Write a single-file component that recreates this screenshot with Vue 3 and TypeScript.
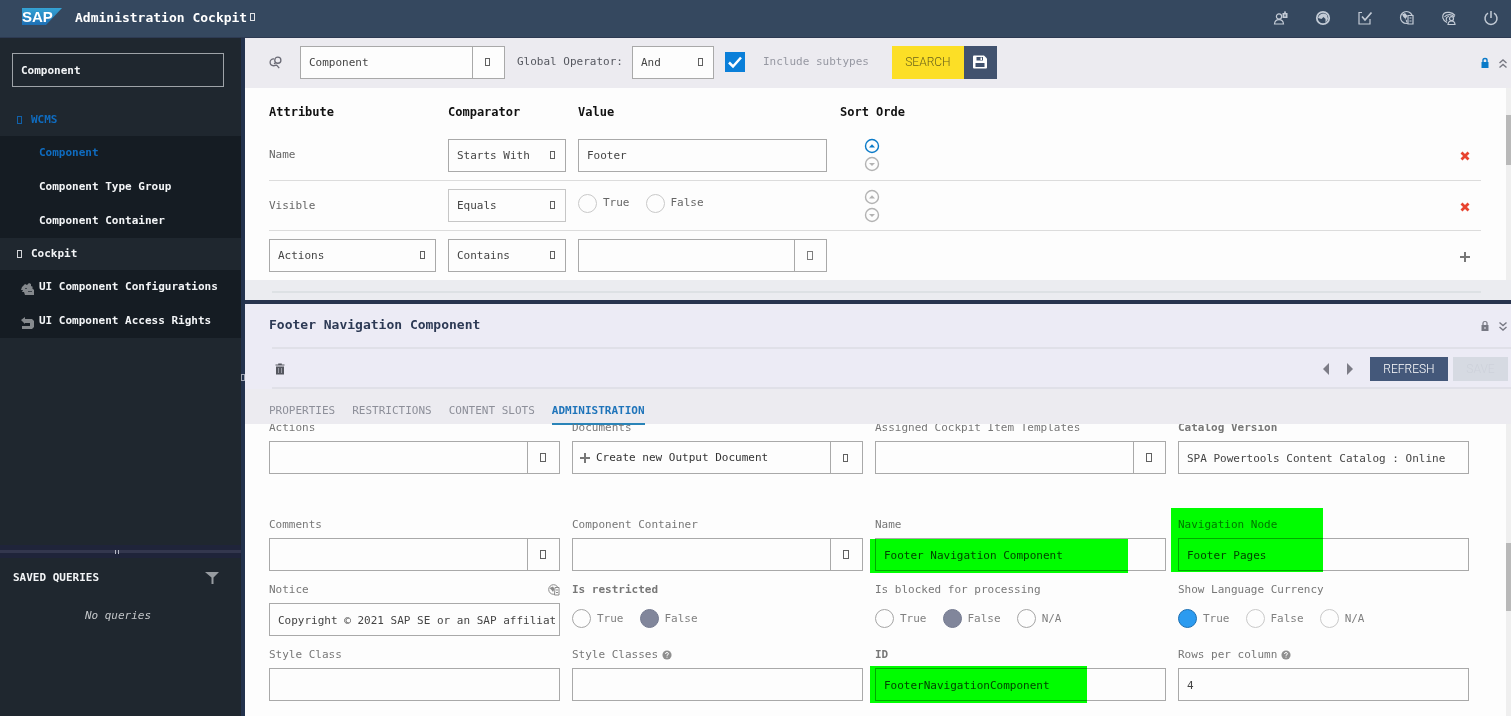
<script setup lang="ts">
import { reactive, ref } from 'vue'

interface NavGroup {
  title: string
  active: boolean
  items: { label: string; active?: boolean; icon?: string }[]
}

interface Field {
  id: string
  label: string
  kind: 'text' | 'combo' | 'create' | 'radio'
  value?: string
  bold?: boolean
  help?: boolean
  globe?: boolean
  options?: string[]
  tone?: string
  mark?: string
  spaced?: boolean
}

const navGroups: NavGroup[] = [
  {
    title: 'WCMS',
    active: true,
    items: [
      { label: 'Component', active: true },
      { label: 'Component Type Group' },
      { label: 'Component Container' },
    ],
  },
  {
    title: 'Cockpit',
    active: false,
    items: [
      { label: 'UI Component Configurations', icon: 'config' },
      { label: 'UI Component Access Rights', icon: 'rights' },
    ],
  },
]

const navQuery = ref('Component')
const typeName = ref('Component')
const subtypes = ref(true)
const nameFilter = ref('Footer')
const tabs = ['PROPERTIES', 'RESTRICTIONS', 'CONTENT SLOTS', 'ADMINISTRATION']
const activeTab = ref('ADMINISTRATION')

const fields = reactive<Field[]>([
  { id: 'actions', label: 'Actions', kind: 'combo', value: '', spaced: true },
  { id: 'documents', label: 'Documents', kind: 'create', spaced: true },
  { id: 'templates', label: 'Assigned Cockpit Item Templates', kind: 'combo', value: '', spaced: true },
  { id: 'catalog', label: 'Catalog Version', kind: 'text', value: 'SPA Powertools Content Catalog : Online', bold: true, spaced: true },
  { id: 'comments', label: 'Comments', kind: 'combo', value: '' },
  { id: 'container', label: 'Component Container', kind: 'combo', value: '' },
  { id: 'name', label: 'Name', kind: 'text', value: 'Footer Navigation Component', mark: 'mark-name' },
  { id: 'node', label: 'Navigation Node', kind: 'text', value: 'Footer Pages', mark: 'mark-node' },
  { id: 'notice', label: 'Notice', kind: 'text', value: 'Copyright © 2021 SAP SE or an SAP affiliate company.', globe: true },
  { id: 'restricted', label: 'Is restricted', kind: 'radio', value: 'False', bold: true, options: ['True', 'False'], tone: 'muted' },
  { id: 'blocked', label: 'Is blocked for processing', kind: 'radio', value: 'False', options: ['True', 'False', 'N/A'], tone: 'muted' },
  { id: 'currency', label: 'Show Language Currency', kind: 'radio', value: 'True', options: ['True', 'False', 'N/A'], tone: 'light' },
  { id: 'styleclass', label: 'Style Class', kind: 'text', value: '' },
  { id: 'styleclasses', label: 'Style Classes', kind: 'text', value: '', help: true },
  { id: 'uid', label: 'ID', kind: 'text', value: 'FooterNavigationComponent', bold: true, mark: 'mark-id' },
  { id: 'rows', label: 'Rows per column', kind: 'text', value: '4', help: true },
])
</script>

<template>
  <div class="app">
    <header class="shell">
      <svg class="logo" viewBox="0 0 40 17" role="img" aria-label="SAP">
        <defs>
          <linearGradient id="sapfill" x1="0" y1="0" x2="0" y2="1">
            <stop offset="0" stop-color="#35a3d4" />
            <stop offset="1" stop-color="#1d6fb5" />
          </linearGradient>
        </defs>
        <path d="M0 0H40L24 17H0Z" fill="url(#sapfill)" />
        <text x="0" y="14" class="logo-text">SAP</text>
      </svg>
      <h1>Administration Cockpit</h1>
      <span class="tofu"></span>
      <nav class="shell-tools" aria-label="Shell">
        <button aria-label="User role">
          <svg viewBox="0 0 16 16"><circle cx="6" cy="6.500" r="2.600" /><path d="M1.500 14c.3-3 2-4.300 4.500-4.300S10.200 11 10.500 14Z" /><path d="M9.500 3H14.500V8H9.500ZM11 3V1.500h2V3h-.8V2.200h-.4V3Z" class="solid" /><path d="M12 4.500V6.500" class="cut" /></svg>
        </button>
        <button aria-label="Perspective">
          <svg viewBox="0 0 16 16"><circle cx="8" cy="8" r="6.200" stroke-width="1.800" /><path d="M3 8C4 3.500 9 2 12 5L13 9l-2.500 4V9L8.500 7 6.500 9Z" class="solid" /></svg>
        </button>
        <button aria-label="Tasks">
          <svg viewBox="0 0 16 16"><path d="M5 2.500H2V14H13V9" /><path d="M5 6.500 8 10 14.500 2.500" stroke-width="1.700" /></svg>
        </button>
        <button aria-label="Locale">
          <svg viewBox="0 0 16 16"><circle cx="7.500" cy="7.500" r="6" /><path d="M3 4.500 6 3 8.500 6 6.500 9 4.500 7ZM6.500 9l2 2-1 2Z" class="solid" /><path d="M9 5.500H14V14H9Z" class="cover" /><path d="M10.500 8h2M10.500 11h2" /></svg>
        </button>
        <button aria-label="Data user">
          <svg viewBox="0 0 16 16"><path d="M6 12.500C1 10 .8 5.500 3 3.500s8-1.500 11 2" /><path d="M3.500 7C6 3.500 11 4 13.500 7" /><path d="M6 11C4 8.500 6 6.500 8 6.500" /><circle cx="10.500" cy="8.700" r="2" /><path d="M7 14.500c.2-2.500 1.500-3.500 3.500-3.500s3.300 1 3.500 3.500Z" /></svg>
        </button>
        <button aria-label="Log out">
          <svg viewBox="0 0 16 16"><path d="M5 3.200A6 6 0 1 0 11 3.200M8 1v7" stroke-width="1.500" /></svg>
        </button>
      </nav>
    </header>

    <div class="body">
      <aside class="side">
        <div class="side-top">
          <input v-model="navQuery" class="nav-search" type="text" aria-label="Filter navigation" />
          <nav class="tree" aria-label="Explorer">
            <section v-for="g in navGroups" :key="g.title">
              <button class="group" :class="{ active: g.active }"><span class="tofu"></span>{{ g.title }}</button>
              <ul>
                <li v-for="i in g.items" :key="i.label">
                  <a href="#" :class="{ active: i.active }">
                    <span v-if="i.icon" class="node-icon">
                      <svg v-if="i.icon === 'config'" viewBox="0 0 14 14"><path d="M1 5l3-3 2 1 2-2 2 1v2l2 1-1 1 2 2v5H4l-1-3H1l1-2H0Z" fill="#85898d" /><path d="M4 6h2v1H4ZM7 9h4v1H7Z" fill="#3d444b" /></svg>
                      <svg v-else viewBox="0 0 14 14"><path d="M0 4l4-3v2h7l2 2v6l-2 2H1v-3h8V7H4v1Z" fill="#85898d" /></svg>
                    </span>
                    {{ i.label }}
                  </a>
                </li>
              </ul>
            </section>
          </nav>
        </div>
        <div class="side-split"><i></i><i></i></div>
        <section class="saved">
          <div class="saved-head">
            <h2>SAVED QUERIES</h2>
            <button aria-label="Filter saved queries">
              <svg viewBox="0 0 14 14"><path d="M0 1h14L8.500 6.500V13h-2V6.500Z" fill="#979ca1" /></svg>
            </button>
          </div>
          <p>No queries</p>
        </section>
      </aside>
      <div class="v-split"><span class="tofu"></span></div>

      <main class="main">
        <section class="search-pane">
          <div class="search-bar">
            <button class="mode" aria-label="Switch search mode">
              <svg viewBox="0 0 14 14"><circle cx="9.500" cy="4.500" r="3.300" /><path d="M5.500 3.200C2.500 3 1.200 4.800 1.200 6.800S2.700 10.500 5 10.500C6.500 10.500 7.500 10 8 9.300M8 9.500l3 3.500M7.200 7 5.500 8.700" /></svg>
            </button>
            <div class="combo type-combo">
              <input v-model="typeName" type="text" aria-label="Type" />
              <button aria-label="Open types"><span class="tofu"></span></button>
            </div>
            <label class="op-label" for="op">Global Operator:</label>
            <div class="pick op-pick">
              <select id="op"><option>And</option></select><span class="tofu"></span>
            </div>
            <span class="check">
              <input id="sub" v-model="subtypes" type="checkbox" />
              <svg viewBox="0 0 20 20"><path d="M4 10.500 8 14.500 16 5.500" fill="none" stroke="#fff" stroke-width="2.500" /></svg>
            </span>
            <label class="sub-label" for="sub">Include subtypes</label>
            <div class="actions">
              <button class="go">SEARCH</button>
              <button class="save-query" aria-label="Save query">
                <svg viewBox="0 0 14 14"><path d="M0 1.500Q0 .5 1 .5H11L14 3.500V12.500Q14 13.500 13 13.500H1Q0 13.500 0 12.500Z" fill="#fff" /><path d="M3.500 2H10V5.500H3.500ZM2.500 8H11.500V12H2.500Z" fill="#41526e" /><path d="M7.500 2.500H9V5H7.500Z" fill="#fff" /></svg>
              </button>
            </div>
            <div class="pane-tools">
              <button class="blue" aria-label="Locked">
                <svg viewBox="0 0 10 12"><path d="M1.500 5H8.500V11H1.500Z" fill="currentColor" /><path d="M3 5V3Q3 1.500 5 1.500T7 3V5" fill="none" stroke="currentColor" stroke-width="1.400" /></svg>
              </button>
              <button aria-label="Collapse">
                <svg viewBox="0 0 10 12"><path d="M1.500 6 5 3 8.500 6M1.500 10.500 5 7.500 8.500 10.500" fill="none" stroke="currentColor" stroke-width="1.400" /></svg>
              </button>
            </div>
          </div>

          <div class="scroller">
            <div class="conditions">
              <table>
                <colgroup><col class="c-attr" /><col class="c-comp" /><col class="c-value" /><col /><col class="c-act" /></colgroup>
                <thead>
                  <tr><th>Attribute</th><th>Comparator</th><th>Value</th><th>Sort Orde</th><th></th></tr>
                </thead>
                <tbody>
                  <tr>
                    <td>Name</td>
                    <td><div class="pick"><select aria-label="Name comparator"><option>Starts With</option></select><span class="tofu"></span></div></td>
                    <td><input v-model="nameFilter" class="box value" type="text" aria-label="Name value" /></td>
                    <td>
                      <div class="sort">
                        <button class="blue" aria-label="Sort name ascending"><svg viewBox="0 0 16 16"><circle cx="8" cy="8" r="6.500" /><path d="M5 9.500 8 6.300 11 9.500Z" class="tri" /></svg></button>
                        <button aria-label="Sort name descending"><svg viewBox="0 0 16 16"><circle cx="8" cy="8" r="6.500" /><path d="M5 7 8 10 11 7Z" class="tri" /></svg></button>
                      </div>
                    </td>
                    <td><button class="row-btn red" aria-label="Remove name"><svg viewBox="0 0 10 10"><path d="M1.500 1.500 8.500 8.500M8.500 1.500 1.500 8.500" /></svg></button></td>
                  </tr>
                  <tr>
                    <td>Visible</td>
                    <td><div class="pick soft"><select aria-label="Visible comparator"><option>Equals</option></select><span class="tofu"></span></div></td>
                    <td>
                      <div class="radios light dark-text">
                        <label><input type="radio" name="visible" />True</label>
                        <label><input type="radio" name="visible" />False</label>
                      </div>
                    </td>
                    <td>
                      <div class="sort">
                        <button aria-label="Sort visible ascending"><svg viewBox="0 0 16 16"><circle cx="8" cy="8" r="6.500" /><path d="M5 9.500 8 6.300 11 9.500Z" class="tri" /></svg></button>
                        <button aria-label="Sort visible descending"><svg viewBox="0 0 16 16"><circle cx="8" cy="8" r="6.500" /><path d="M5 7 8 10 11 7Z" class="tri" /></svg></button>
                      </div>
                    </td>
                    <td><button class="row-btn red" aria-label="Remove visible"><svg viewBox="0 0 10 10"><path d="M1.500 1.500 8.500 8.500M8.500 1.500 1.500 8.500" /></svg></button></td>
                  </tr>
                  <tr>
                    <td><div class="pick attr"><select aria-label="New attribute"><option>Actions</option></select><span class="tofu"></span></div></td>
                    <td><div class="pick"><select aria-label="New comparator"><option>Contains</option></select><span class="tofu"></span></div></td>
                    <td><div class="combo value"><input type="text" aria-label="New value" /><button aria-label="Choose value"><span class="tofu big"></span></button></div></td>
                    <td></td>
                    <td><button class="row-btn add" aria-label="Add condition"><svg viewBox="0 0 12 12"><path d="M6 1V11M1 6H11" /></svg></button></td>
                  </tr>
                </tbody>
              </table>
            </div>
            <div class="track"><div class="thumb thumb-top"></div></div>
          </div>
          <div class="search-foot"><hr /></div>
        </section>

        <div class="h-split"></div>

        <section class="editor">
          <div class="editor-title">
            <h2>Footer Navigation Component</h2>
            <div class="pane-tools">
              <button aria-label="Lock">
                <svg viewBox="0 0 10 12"><path d="M1.500 5H8.500V11H1.500Z" fill="currentColor" /><path d="M3 5V3Q3 1.500 5 1.500T7 3V5" fill="none" stroke="currentColor" stroke-width="1.200" /><path d="M5 7V9" stroke="#ecebf5" /></svg>
              </button>
              <button aria-label="Expand">
                <svg viewBox="0 0 10 12"><path d="M1.500 2.500 5 5.500 8.500 2.500M1.500 7 5 10 8.500 7" fill="none" stroke="currentColor" stroke-width="1.400" /></svg>
              </button>
            </div>
          </div>
          <div class="editor-bar">
            <button class="trash" aria-label="Delete">
              <svg viewBox="0 0 10 12"><path d="M.5 2.500V1.500H3.200V.5H6.800V1.500H9.500V2.500ZM1 3.500H9V11.500H1Z" fill="#55575f" /><path d="M3.500 5V10M6.500 5V10" stroke="#9a9ba5" /></svg>
            </button>
            <div class="editor-actions">
              <button class="arrow" aria-label="Previous"><svg viewBox="0 0 8 12"><path d="M7 0V12L1 6Z" fill="#7c7c86" /></svg></button>
              <button class="arrow" aria-label="Next"><svg viewBox="0 0 8 12"><path d="M1 0V12L7 6Z" fill="#7c7c86" /></svg></button>
              <button class="refresh">REFRESH</button>
              <button class="save" disabled>SAVE</button>
            </div>
          </div>
          <div class="tabs" role="tablist">
            <button v-for="t in tabs" :key="t" role="tab" :class="{ active: t === activeTab }" @click="activeTab = t">{{ t }}</button>
          </div>
          <div class="scroller fill">
            <div class="form-view">
              <div class="form">
                <div v-for="f in fields" :key="f.id" class="field" :class="{ spaced: f.spaced }">
                  <div class="caption" :class="{ bold: f.bold }">
                    <label :for="f.id">{{ f.label }}</label>
                    <svg v-if="f.help" class="help" viewBox="0 0 12 12"><circle cx="6" cy="6" r="5.500" fill="#8f8f8f" /><path d="M4.200 4.800Q4.300 3 6 3T7.800 4.600Q7.800 5.500 6 6.300V7M6 8V9.200" fill="none" stroke="#fff" stroke-width="1.200" /></svg>
                    <svg v-if="f.globe" class="globe" viewBox="0 0 12 12"><circle cx="5.500" cy="5.500" r="4.800" fill="none" stroke="#8a8a8a" /><path d="M1.500 4 5 2.500 6.500 5 5 8 3.500 6Z" fill="#8a8a8a" /><path d="M7 3.500H11V11H6.500Z" fill="#fdfdfd" stroke="#8a8a8a" /><path d="M8 6H10M8 8.500H10" stroke="#8a8a8a" /></svg>
                  </div>
                  <input v-if="f.kind === 'text'" :id="f.id" v-model="f.value" class="box" type="text" />
                  <div v-else-if="f.kind === 'combo'" class="combo">
                    <input :id="f.id" v-model="f.value" type="text" />
                    <button :aria-label="'Choose ' + f.label"><span class="tofu big"></span></button>
                  </div>
                  <div v-else-if="f.kind === 'create'" class="combo">
                    <button :id="f.id" class="create">
                      <svg viewBox="0 0 12 12"><path d="M6 1V11M1 6H11" /></svg>Create new Output Document
                    </button>
                    <button :aria-label="'Choose ' + f.label"><span class="tofu"></span></button>
                  </div>
                  <div v-else :id="f.id" class="radios" :class="f.tone" role="radiogroup">
                    <label v-for="o in f.options" :key="o"><input v-model="f.value" type="radio" :name="f.id" :value="o" />{{ o }}</label>
                  </div>
                  <div v-if="f.mark" class="mark" :class="f.mark"></div>
                </div>
              </div>
            </div>
            <div class="track"><div class="thumb thumb-bottom"></div></div>
          </div>
        </section>
      </main>
    </div>
  </div>
</template>

<style>
body {
  margin: 0;
  overflow: hidden;
}
</style>

<style scoped>
.app,
.app * {
  box-sizing: border-box;
}
.app {
  height: 100vh;
  display: flex;
  flex-direction: column;
  font-family: "DejaVu Sans Mono", "Liberation Mono", monospace;
  font-size: 11px;
  line-height: 16px;
  color: #444;
  background: #fdfdfd;
}
button,
input,
select {
  font: inherit;
  color: inherit;
  margin: 0;
  border-radius: 0;
}
button {
  padding: 0;
  border: 0;
  background: none;
  display: inline-flex;
  align-items: center;
}
h1,
h2,
p,
ul,
hr {
  margin: 0;
  padding: 0;
}
svg {
  display: block;
}
.tofu {
  display: inline-block;
  flex: none;
  width: 5px;
  height: 8px;
  border: 1px solid currentColor;
  opacity: 0.85;
}
.tofu.big {
  width: 6px;
  height: 9px;
}

/* Shell bar */
.shell {
  flex: none;
  height: 38px;
  display: flex;
  align-items: center;
  padding: 0 12px 4px 22px;
  color: #fff;
  background: #35485f;
  border-bottom: 1px solid #2d3a52;
}
.logo {
  width: 40px;
  height: 17px;
  margin-right: 13px;
}
.logo-text {
  font: bold 15px "Liberation Sans", sans-serif;
  fill: #fff;
}
.shell h1 {
  font-size: 13px;
  line-height: 18px;
  padding-top: 2px;
}
.shell > .tofu {
  margin-left: 3px;
}
.shell-tools {
  margin-left: auto;
  display: flex;
  gap: 26px;
  padding-top: 3px;
}
.shell-tools svg {
  width: 16px;
  height: 16px;
  fill: none;
  stroke: #c3cbd6;
  stroke-width: 1.2;
}
.shell-tools .solid {
  fill: #c3cbd6;
  stroke: none;
}
.shell-tools .cut {
  stroke: #35485f;
}
.shell-tools .cover {
  fill: #35485f;
}

/* Side navigation */
.body {
  flex: 1;
  min-height: 0;
  display: flex;
}
.side {
  flex: none;
  width: 241px;
  display: flex;
  flex-direction: column;
  color: #f3f5f7;
  background: #1f272f;
  font-weight: bold;
}
.side-top {
  flex: 1;
  padding-top: 15px;
}
.nav-search {
  display: block;
  width: 212px;
  height: 34px;
  margin: 0 0 17px 12px;
  padding: 1px 8px 0;
  background: transparent;
  border: 1px solid #9ea3a8;
}
.group {
  width: 100%;
  height: 32px;
  padding-left: 17px;
  gap: 9px;
  font-weight: bold;
}
.group.active {
  color: #0f6cc0;
}
.tree ul {
  list-style: none;
  background: #151c23;
}
.tree a {
  display: flex;
  align-items: center;
  height: 34px;
  padding-left: 39px;
  color: inherit;
  text-decoration: none;
  position: relative;
}
.tree a.active {
  color: #0f6cc0;
}
.node-icon {
  position: absolute;
  left: 21px;
  top: 12px;
}
.node-icon svg {
  width: 14px;
  height: 14px;
}
.side-split {
  height: 13px;
  display: flex;
  align-items: center;
  justify-content: center;
  gap: 2px;
  padding-right: 7px;
  background: linear-gradient(#1f243a 5px, #33374e 5px, #33374e 8px, #1f243a 8px);
}
.side-split i {
  width: 1px;
  height: 4px;
  background: #b5b8c4;
}
.saved {
  height: 158px;
  padding: 12px 22px 0 13px;
}
.saved-head {
  display: flex;
  align-items: center;
  justify-content: space-between;
}
.saved h2 {
  font-size: 11px;
}
.saved svg {
  width: 14px;
  height: 14px;
}
.saved p {
  padding: 22px 0 0 4px;
  text-align: center;
  font-weight: normal;
  font-style: italic;
  color: #c3c6c9;
}
.v-split {
  flex: none;
  width: 4px;
  display: flex;
  align-items: center;
  justify-content: center;
  color: #b5b8c4;
  background: #23324d;
}
.v-split .tofu {
  width: 4px;
  height: 7px;
}

/* Shared controls */
.main {
  flex: 1;
  min-width: 0;
  display: flex;
  flex-direction: column;
}
.box,
.combo,
.pick select {
  height: 33px;
  border: 1px solid #a9a9a9;
  background: #fdfdfd;
}
.box {
  display: block;
  width: 100%;
  padding: 1px 4px 0 8px;
}
.combo {
  display: flex;
}
.combo input {
  flex: 1;
  min-width: 0;
  padding: 1px 8px 0;
  border: 0;
  background: transparent;
}
.combo > button:last-child {
  width: 32px;
  padding-right: 2px;
  justify-content: center;
  border-left: 1px solid #a9a9a9;
}
.pick {
  position: relative;
  width: 118px;
}
.pick select {
  display: block;
  width: 100%;
  padding: 1px 8px 0;
  appearance: none;
}
.pick .tofu {
  position: absolute;
  right: 11px;
  top: 12px;
  pointer-events: none;
}
.pick.soft select {
  border-color: #c6c6c6;
}
.radios {
  display: flex;
  align-items: center;
  gap: 16px;
  height: 31px;
  color: #808080;
}
.radios.dark-text {
  height: 36px;
  padding-bottom: 5px;
  color: #666;
}
.radios label {
  display: flex;
  align-items: center;
  gap: 6px;
}
.radios input {
  appearance: none;
  width: 19px;
  height: 19px;
  border: 1px solid #a5a5a5;
  border-radius: 50%;
  background: #fdfdfd;
}
.radios.light input {
  border-color: #c9c9c9;
}
.radios.muted input:checked {
  background: #81869b;
  border-color: #747a90;
}
.radios.light input:checked {
  background: #2b9bf0;
  border-color: #1b6fb3;
}
.blue {
  color: #0a7ac8;
}
.pane-tools {
  margin-left: auto;
  display: flex;
  gap: 8px;
  padding-top: 2px;
  color: #777883;
}
.pane-tools .blue {
  color: #0a7ac8;
}
.pane-tools svg {
  width: 10px;
  height: 12px;
}
.scroller {
  display: flex;
  background: #fdfdfd;
}
.track {
  flex: none;
  width: 5px;
  background: #efefef;
}
.thumb {
  background: #b9b9b9;
}
.thumb-top {
  margin-top: 27px;
  height: 50px;
}
.thumb-bottom {
  margin-top: 119px;
  height: 68px;
}

/* Search pane */
.search-bar {
  height: 50px;
  display: flex;
  align-items: center;
  padding: 0 3px 2px 24px;
  background: #ecebf0;
}
.mode svg {
  width: 13px;
  height: 13px;
  fill: none;
  stroke: #6b6b76;
  stroke-width: 1.4;
}
.type-combo {
  width: 205px;
  margin-left: 18px;
}
.op-label {
  margin-left: 12px;
  color: #55575f;
}
.op-pick {
  width: 82px;
  margin: 0 11px 0 9px;
}
.check {
  position: relative;
  width: 20px;
  height: 20px;
}
.check input {
  appearance: none;
  display: block;
  width: 20px;
  height: 20px;
  background: #0a7fd9;
}
.check svg {
  position: absolute;
  inset: 0;
  pointer-events: none;
}
.sub-label {
  margin-left: 18px;
  color: #9698a2;
}
.actions {
  display: flex;
  margin-left: 23px;
}
.go {
  width: 72px;
  height: 33px;
  justify-content: center;
  font: 300 12px/16px Roboto, sans-serif;
  color: #6b641c;
  background: #fcdf26;
}
.save-query {
  width: 33px;
  height: 33px;
  justify-content: center;
  background: #41526e;
}
.save-query svg {
  width: 14px;
  height: 14px;
}
.conditions {
  flex: 1;
  min-width: 0;
  padding: 0 25px 0 24px;
}
table {
  width: 100%;
  table-layout: fixed;
  border-collapse: separate;
  border-spacing: 0;
  color: #666;
}
.c-attr {
  width: 179px;
}
.c-comp {
  width: 130px;
}
.c-value {
  width: 262px;
}
.c-act {
  width: 32px;
}
th {
  height: 42px;
  padding: 5px 0 0;
  text-align: left;
  font-size: 12px;
  color: #111;
}
td {
  height: 50px;
  padding: 0;
}
tbody tr:first-child td {
  height: 51px;
}
tbody tr:not(:last-child) td {
  border-bottom: 1px solid #dcdcdc;
}
tbody tr:last-child td {
  height: 49px;
}
.pick.attr {
  width: 167px;
}
.pick,
td .box {
  color: #444;
}
.value {
  width: 249px;
}
.sort {
  width: 64px;
  display: flex;
  flex-direction: column;
  align-items: center;
  gap: 2px;
  color: #b3b3b3;
}
.sort svg {
  width: 16px;
  height: 16px;
  fill: none;
  stroke: currentColor;
  stroke-width: 1.4;
}
.sort .tri {
  fill: currentColor;
  stroke: none;
}
.row-btn {
  display: flex;
  width: 32px;
  padding-top: 2px;
  justify-content: center;
}
.row-btn svg {
  width: 10px;
  height: 10px;
  stroke: #e8432f;
  stroke-width: 2.8;
}
.row-btn.add svg {
  width: 12px;
  height: 12px;
  stroke: #777;
  stroke-width: 2;
}
.search-foot {
  height: 20px;
  padding: 11px 30px 0 27px;
  background: #ebecf0;
}
.search-foot hr {
  height: 2px;
  border: 0;
  background: #dde1e4;
}
.h-split {
  flex: none;
  height: 4px;
  background: #28344e;
}

/* Editor pane */
.editor {
  flex: 1;
  min-height: 0;
  display: flex;
  flex-direction: column;
}
.editor-title,
.editor-bar,
.tabs {
  flex: none;
  display: flex;
  align-items: center;
  background: linear-gradient(#e0e0e8, #e0e0e8) 27px 100% / 100% 2px no-repeat #ecebf5;
}
.editor-title {
  height: 45px;
  padding: 0 3px 3px 24px;
}
.editor-title h2 {
  font-size: 13px;
  line-height: 18px;
  color: #2d3a55;
}
.editor-bar {
  height: 40px;
  padding: 0 3px 1px 30px;
}
.trash svg {
  width: 10px;
  height: 12px;
}
.editor-actions {
  margin-left: auto;
  display: flex;
  align-items: center;
}
.arrow {
  margin-right: 16px;
}
.arrow svg {
  width: 8px;
  height: 12px;
}
.refresh,
.save {
  height: 24px;
  justify-content: center;
  font: 300 12px/16px Roboto, sans-serif;
}
.refresh {
  width: 78px;
  margin-right: 5px;
  color: #fff;
  background: #44587a;
}
.save {
  width: 55px;
  color: #cdd1da;
  background: #d6dae2;
}
.tabs {
  height: 35px;
  padding-left: 24px;
  gap: 17px;
  background: #ecebf0;
  position: relative;
}
.tabs button {
  height: 36px;
  align-self: flex-start;
  padding-top: 9px;
  color: #8d8f99;
  border-bottom: 2px solid transparent;
}
.tabs .active {
  font-weight: bold;
  color: #1f74ba;
  border-color: #2a84b8;
}
.fill {
  flex: 1;
  min-height: 0;
}
.form-view {
  flex: 1;
  min-width: 0;
  overflow: hidden;
  padding: 0 37px 0 24px;
}
.form {
  display: grid;
  grid-template-columns: repeat(4, minmax(0, 1fr));
  column-gap: 12px;
  margin-top: -15px;
}
.field {
  position: relative;
  height: 65px;
  padding-top: 11px;
}
.spaced {
  margin-bottom: 32px;
}
.caption {
  display: flex;
  align-items: center;
  gap: 4px;
  height: 16px;
  margin-bottom: 5px;
  color: #777;
}
.caption.bold {
  font-weight: bold;
}
.help {
  width: 10px;
  height: 10px;
}
.globe {
  width: 12px;
  height: 12px;
  margin-left: auto;
}
.create {
  flex: 1;
  gap: 5px;
  padding-left: 6px;
  color: #333;
}
.create svg {
  width: 12px;
  height: 12px;
  stroke: #777;
  stroke-width: 2;
}
.mark {
  position: absolute;
  background: #00ff00;
  mix-blend-mode: multiply;
  pointer-events: none;
}
.mark-name {
  left: -5px;
  top: 33px;
  width: 258px;
  height: 34px;
}
.mark-node {
  left: -7px;
  top: 2px;
  width: 152px;
  height: 64px;
}
.mark-id {
  left: -5px;
  top: 30px;
  width: 217px;
  height: 37px;
}
</style>
